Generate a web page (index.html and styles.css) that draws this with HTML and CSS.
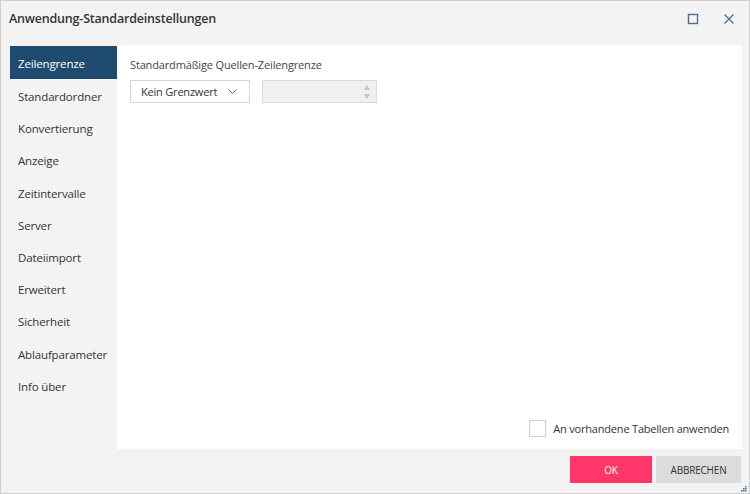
FILE: index.html
```html
<!DOCTYPE html>
<html lang="de">
<head>
    <meta charset="UTF-8">
    <title>Anwendung-Standardeinstellungen</title>
    <link rel="stylesheet" href="styles.css">
</head>
<body>
    <div class="dialog">
        <div class="title-bar">
            <span class="title">Anwendung-Standardeinstellungen</span>
            <div class="window-btns">
                <button class="win-btn" title="Maximieren">
                    <svg width="12" height="12" viewBox="0 0 12 12"><rect x="1.5" y="1.5" width="9" height="9" fill="none" stroke="#4d7092" stroke-width="1.4"/></svg>
                </button>
                <button class="win-btn" title="Schließen">
                    <svg width="12" height="12" viewBox="0 0 12 12"><path d="M1.5 1.5 L10.5 10.5 M10.5 1.5 L1.5 10.5" stroke="#4d7092" stroke-width="1.3"/></svg>
                </button>
            </div>
        </div>

        <div class="main">
            <ul class="nav">
                <li class="nav-item active">Zeilengrenze</li>
                <li class="nav-item">Standardordner</li>
                <li class="nav-item">Konvertierung</li>
                <li class="nav-item">Anzeige</li>
                <li class="nav-item">Zeitintervalle</li>
                <li class="nav-item">Server</li>
                <li class="nav-item">Dateiimport</li>
                <li class="nav-item">Erweitert</li>
                <li class="nav-item">Sicherheit</li>
                <li class="nav-item">Ablaufparameter</li>
                <li class="nav-item">Info über</li>
            </ul>

            <div class="panel">
                <div class="field-label">Standardmäßige Quellen-Zeilengrenze</div>
                <div class="field-row">
                    <div class="select">
                        <span>Kein Grenzwert</span>
                        <svg width="11" height="7" viewBox="0 0 11 7"><path d="M1.5 1.5 L5.5 5.5 L9.5 1.5" fill="none" stroke="#666" stroke-width="1"/></svg>
                    </div>
                    <div class="spinner">
                        <div class="spin-arrows">
                            <span class="arrow-up"></span>
                            <span class="arrow-down"></span>
                        </div>
                    </div>
                </div>

                <label class="apply-row">
                    <span class="checkbox"></span>
                    <span>An vorhandene Tabellen anwenden</span>
                </label>
            </div>
        </div>

        <div class="footer">
            <button class="btn btn-ok">OK</button>
            <button class="btn btn-cancel">ABBRECHEN</button>
            <svg class="grip" width="7" height="7" viewBox="0 0 7 7">
                <rect x="5" y="1" width="1.5" height="1.5" fill="#4d7092"/>
                <rect x="3" y="3" width="1.5" height="1.5" fill="#4d7092"/>
                <rect x="5" y="3" width="1.5" height="1.5" fill="#4d7092"/>
                <rect x="1" y="5" width="1.5" height="1.5" fill="#4d7092"/>
                <rect x="3" y="5" width="1.5" height="1.5" fill="#4d7092"/>
                <rect x="5" y="5" width="1.5" height="1.5" fill="#4d7092"/>
            </svg>
        </div>
    </div>
</body>
</html>
```

FILE: styles.css
```css
html, body {
    margin: 0;
    padding: 0;
}
body {
    font-family: "Open Sans", "Noto Sans", sans-serif;
    color: #333;
    background: #fff;
}
.dialog {
    box-sizing: border-box;
    width: 750px;
    height: 494px;
    border: 1px solid #cfcfcf;
    background: #f3f3f3;
    display: flex;
    flex-direction: column;
    position: relative;
}
.title-bar {
    height: 44px;
    display: flex;
    align-items: center;
    justify-content: space-between;
    padding: 0 10px 0 8px;
}
.title {
    font-size: 12.5px;
    font-weight: 600;
    letter-spacing: -0.2px;
    color: #333;
    margin-top: -10px;
}
.window-btns {
    display: flex;
    gap: 16px;
    margin-top: -8px;
}
.win-btn {
    width: 20px;
    height: 20px;
    border: none;
    background: none;
    padding: 0;
    display: flex;
    align-items: center;
    justify-content: center;
    cursor: pointer;
}
.main {
    display: flex;
    height: 404px;
    padding: 0 7px 0 9px;
}
.nav {
    list-style: none;
    margin: 0;
    padding: 1px 0 0;
    width: 107px;
}
.nav-item {
    height: 32.2px;
    line-height: 35px;
    padding-left: 8px;
    font-size: 11.5px;
    letter-spacing: -0.15px;
    color: #333;
    white-space: nowrap;
    cursor: pointer;
}
.nav-item.active {
    background: #1f4b71;
    color: #fff;
    height: 33px;
    line-height: 35px;
}
.panel {
    flex: 1;
    background: #fff;
    display: flex;
    flex-direction: column;
    padding: 12px 12px 12px 13px;
}
.field-label {
    font-size: 11px;
    letter-spacing: -0.15px;
    color: #444;
    line-height: 15px;
}
.field-row {
    display: flex;
    gap: 12px;
    margin-top: 8px;
}
.select {
    box-sizing: border-box;
    width: 120px;
    height: 23px;
    border: 1px solid #d6d6d6;
    display: flex;
    align-items: center;
    justify-content: space-between;
    padding: 0 11px 0 10px;
    font-size: 11px;
    letter-spacing: -0.2px;
    color: #333;
}
.spinner {
    box-sizing: border-box;
    width: 115px;
    height: 23px;
    border: 1px solid #dadada;
    background: #f0f0f0;
    display: flex;
    justify-content: flex-end;
    align-items: center;
    padding-right: 6px;
}
.spin-arrows {
    display: flex;
    flex-direction: column;
    gap: 4px;
}
.arrow-up, .arrow-down {
    width: 0;
    height: 0;
    border-left: 3px solid transparent;
    border-right: 3px solid transparent;
}
.arrow-up {
    border-bottom: 5px solid #c4c4c4;
}
.arrow-down {
    border-top: 5px solid #c4c4c4;
}
.apply-row {
    margin-top: auto;
    align-self: flex-end;
    display: flex;
    align-items: center;
    gap: 7px;
    font-size: 11px;
    letter-spacing: -0.2px;
    color: #333;
    margin-right: 1px;
}
.checkbox {
    box-sizing: border-box;
    width: 17px;
    height: 17px;
    border: 1px solid #cfcfcf;
    background: #fff;
}
.footer {
    display: flex;
    justify-content: flex-end;
    gap: 4px;
    padding: 7px 8px 0 0;
}
.btn {
    height: 27px;
    border: none;
    font-family: inherit;
    font-size: 10px;
    letter-spacing: -0.2px;
    cursor: pointer;
}
.btn-ok {
    width: 82px;
    background: #ff3668;
    color: #fff;
}
.btn-cancel {
    width: 85px;
    background: #dcdcdc;
    color: #333;
}
.grip {
    position: absolute;
    right: 2px;
    bottom: 1px;
}
```
